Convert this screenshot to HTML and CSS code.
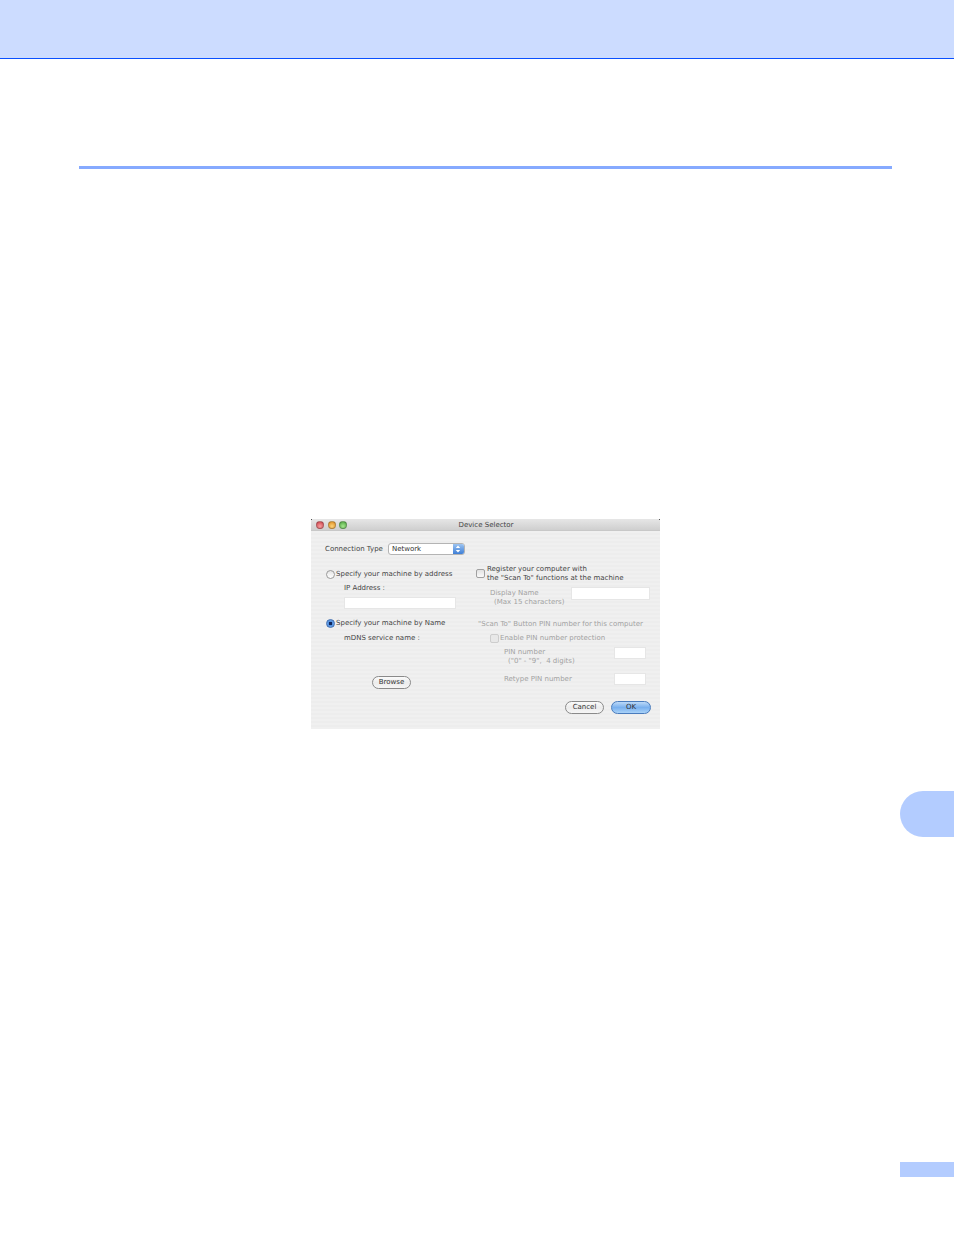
FILE: index.html
```html
<!DOCTYPE html>
<html lang="en">
<head>
<meta charset="utf-8">
<title>Device Selector</title>
<link rel="stylesheet" href="styles.css">
</head>
<body>
<div class="page">
  <header class="top-band"></header>
  <div class="rule"></div>
  <section class="dialog">
    <div class="titlebar">
      <div class="lights">
        <span class="light red"></span>
        <span class="light amber"></span>
        <span class="light green"></span>
      </div>
      <div class="title">Device Selector</div>
    </div>
    <div class="content">
      <div class="col-left">
        <div class="conn-row">
          <span class="label">Connection Type</span>
          <div class="select">
            <span class="select-text">Network</span>
            <span class="select-arrows">
              <svg width="6" height="8" viewBox="0 0 6 8"><path d="M3 0.5 5.2 3H0.8zM3 7.5 0.8 5h4.4z" fill="#fff"/></svg>
            </span>
          </div>
        </div>
        <div class="radio-row first-radio">
          <span class="radio"></span>
          <span class="label">Specify your machine by address</span>
        </div>
        <div class="label sub ip-label">IP Address :</div>
        <div class="field ip-field"></div>
        <div class="radio-row second-radio">
          <span class="radio on"></span>
          <span class="label">Specify your machine by Name</span>
        </div>
        <div class="label sub mdns-label">mDNS service name :</div>
        <button class="btn browse" type="button">Browse</button>
      </div>
      <div class="col-right">
        <div class="register-row">
          <span class="check raised"></span>
          <span class="label two-line">Register your computer with<br>the "Scan To" functions at the machine</span>
        </div>
        <div class="display-row">
          <span class="label muted two-line">Display Name<br><span class="indent">(Max 15 characters)</span></span>
          <div class="field display-field"></div>
        </div>
        <div class="label muted scan-label">"Scan To" Button PIN number for this computer</div>
        <div class="enable-row">
          <span class="check dim"></span>
          <span class="label muted">Enable PIN number protection</span>
        </div>
        <div class="pin-row">
          <span class="label muted two-line">PIN number<br><span class="indent">("0" - "9",  4 digits)</span></span>
          <div class="field pin-field"></div>
        </div>
        <div class="pin-row retype-row">
          <span class="label muted">Retype PIN number</span>
          <div class="field pin-field"></div>
        </div>
        <div class="actions">
          <button class="btn action" type="button">Cancel</button>
          <button class="btn action primary" type="button">OK</button>
        </div>
      </div>
    </div>
  </section>
  <div class="side-tab"></div>
  <div class="foot-tab"></div>
</div>
</body>
</html>
```
FILE: styles.css
```css
* { box-sizing: border-box; }
html, body { margin: 0; padding: 0; background: #fff; }
.page {
  width: 954px;
  height: 1235px;
  display: flex;
  flex-direction: column;
  overflow: hidden;
  font-family: "DejaVu Sans", sans-serif;
}
.top-band {
  height: 59px;
  flex: none;
  background: #ccdcff;
  border-bottom: 1px solid #0a50ff;
}
.rule {
  height: 3px;
  flex: none;
  margin: 107px 62px 0 79px;
  background: #86aaff;
}
.dialog {
  flex: none;
  width: 349px;
  height: 210px;
  margin: 350px 0 0 311px;
  display: flex;
  flex-direction: column;
  background: repeating-linear-gradient(180deg, #f0f0f0 0, #f0f0f0 2px, #ededed 2px, #ededed 4px);
}
.titlebar {
  height: 12px;
  flex: none;
  position: relative;
  display: flex;
  align-items: center;
  justify-content: center;
  background: linear-gradient(180deg, #e6e6e6, #cfcfcf);
  border-bottom: 1px solid #c8c8c8;
}
.titlebar::before,
.titlebar::after {
  content: "";
  position: absolute;
  top: 0;
  width: 1px;
  height: 1px;
  background: #555;
}
.titlebar::before { left: 0; }
.titlebar::after { right: 0; }
.lights {
  position: absolute;
  left: 5px;
  top: 2px;
  display: flex;
  gap: 3.5px;
}
.light {
  width: 8px;
  height: 8px;
  border-radius: 50%;
  border: 1px solid rgba(70, 70, 70, .35);
}
.red { background: radial-gradient(circle at 50% 70%, #f6a0a0, #cf3a44); }
.amber { background: radial-gradient(circle at 50% 70%, #fbd27a, #e08a18); }
.green { background: radial-gradient(circle at 50% 70%, #a5e58f, #4aa53a); }
.title { font-size: 7px; line-height: 12px; color: #444; padding: 1px 0 0 1px; }
.label {
  font-size: 7px;
  line-height: 9px;
  color: #444;
  white-space: pre;
}
.muted { color: #a2a2a2; }
.two-line { display: block; }
.indent { padding-left: 4px; }
.content {
  flex: 1;
  display: flex;
}
.col-left {
  width: 165px;
  padding-left: 14px;
  flex: none;
  display: flex;
  flex-direction: column;
}
.conn-row {
  margin-top: 12px;
  height: 12px;
  display: flex;
  align-items: center;
  gap: 5px;
}
.select {
  width: 77px;
  height: 12px;
  display: flex;
  justify-content: space-between;
  background: #fff;
  border: 1px solid #b4b4b4;
  border-radius: 3px;
  overflow: hidden;
}
.select-text { font-size: 7px; line-height: 10px; color: #333; padding-left: 3px; }
.select-arrows {
  width: 11px;
  display: flex;
  align-items: center;
  justify-content: center;
  background: linear-gradient(180deg, #9cc4f2, #3f7fd6);
}
.radio-row {
  display: flex;
  align-items: center;
  gap: 1px;
  height: 10px;
  padding-left: 1px;
}
.first-radio { margin-top: 14px; }
.second-radio { margin-top: 9px; }
.radio {
  width: 9px;
  height: 9px;
  border-radius: 50%;
  background: linear-gradient(180deg, #e4e4e4, #fff);
  border: 1px solid #9a9a9a;
}
.radio.on {
  background: radial-gradient(circle, #10255a 0 1.5px, #4f8fe0 2px, #8db8ec 100%);
  border-color: #3d6cb0;
}
.sub { margin-left: 19px; }
.ip-label { margin-top: 5px; }
.mdns-label { margin-top: 6px; }
.field {
  background: #fff;
  border: 1px solid #e6e6e6;
  flex: none;
}
.ip-field { width: 112px; height: 12px; margin: 4px 0 0 19px; }
.btn {
  font-family: "DejaVu Sans", sans-serif;
  font-size: 7px;
  line-height: 11px;
  color: #333;
  padding: 0;
  border: 1px solid #8a8a8a;
  border-radius: 7px;
  background: linear-gradient(180deg, #fbfbfb, #ececec 50%, #f6f6f6);
}
.browse { width: 39px; height: 13px; margin: 33px 0 0 47px; }
.col-right {
  flex: 1;
  min-width: 0;
  display: flex;
  flex-direction: column;
}
.register-row {
  margin: 34px 0 0 0;
  display: flex;
  align-items: center;
  gap: 2px;
}
.check {
  width: 9px;
  height: 9px;
  border: 1px solid #a0a0a0;
  border-radius: 2px;
  background: linear-gradient(180deg, #e2e2e2, #fafafa);
  flex: none;
}
.check.raised { margin-bottom: 1px; }
.check.dim { border-color: #cdcdcd; background: #e8e8e8; }
.display-row {
  margin: 0 0 0 14px;
  padding-top: 1px;
  height: 23px;
  display: flex;
  align-items: flex-start;
  width: 160px;
  justify-content: space-between;
}
.display-row .label { margin-top: 5px; }
.display-field { width: 79px; height: 13px; margin-top: 3px; }
.scan-label { margin: 14px 0 0 2px; }
.enable-row {
  margin: 5px 0 0 14px;
  display: flex;
  align-items: center;
  gap: 1px;
  height: 9px;
}
.pin-row {
  margin: 5px 0 0 28px;
  width: 142px;
  display: flex;
  align-items: flex-start;
  justify-content: space-between;
  height: 18px;
}
.pin-row > .pin-field { margin-top: -1px; }
.retype-row { margin-top: 7px; height: 13px; align-items: center; }
.pin-field { width: 32px; height: 12px; }
.actions {
  margin: 15px 0 0 89px;
  display: flex;
  gap: 7px;
}
.action { width: 39px; height: 13px; }
.primary {
  width: 40px;
  border-color: #4a7cbd;
  background: linear-gradient(180deg, #bcd9f8, #79b0ee 50%, #a9d2f8);
}
.side-tab {
  flex: none;
  align-self: flex-end;
  width: 54px;
  height: 46px;
  margin-top: 62px;
  background: #b3ccff;
  border-radius: 23px 0 0 23px;
}
.foot-tab {
  flex: none;
  align-self: flex-end;
  width: 54px;
  height: 15px;
  margin-top: 325px;
  background: #b3ccff;
}
```
